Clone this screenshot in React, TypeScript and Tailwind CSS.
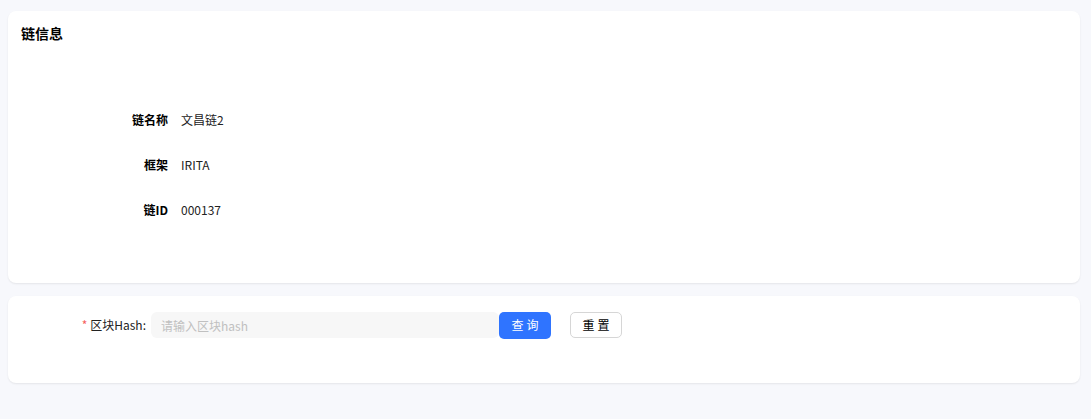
export default function App() {
  const rows = [
    { label: '链名称', value: '文昌链2' },
    { label: '框架', value: 'IRITA' },
    { label: '链ID', value: '000137' },
  ]

  return (
    <div
      className="w-[1091px] h-[419px] bg-[#f7f8fc] px-2 pt-[11px] text-[#1f1f1f]"
      style={{ fontFamily: '"Noto Sans CJK SC", "Noto Sans", sans-serif' }}
    >
      {/* Chain info card */}
      <div className="w-[1072px] h-[272px] bg-white rounded-lg shadow-[0_1px_2px_rgba(0,0,0,0.08)] pt-[12px] px-[13px]">
        <h3 className="text-[14px] leading-[20px] font-bold text-black">链信息</h3>
        <div className="mt-[67px] flex flex-col gap-[25px]">
          {rows.map(r => (
            <div key={r.label} className="flex items-center h-[20px] text-[12px]">
              <div className="w-[147px] text-right font-bold text-black">{r.label}</div>
              <div className="ml-[13px] text-[#222]">{r.value}</div>
            </div>
          ))}
        </div>
      </div>

      {/* Query card */}
      <div className="mt-[13px] w-[1072px] h-[87px] bg-white rounded-lg shadow-[0_1px_2px_rgba(0,0,0,0.08)] pt-[16px]">
        <div className="flex items-center h-[26px] text-[12px]">
          <div className="w-[138px] flex justify-end items-center">
            <span className="text-[#f5605c] mr-[3px]">*</span>
            <span className="text-[#222]">区块Hash:</span>
          </div>
          <input
            className="ml-[5px] w-[348px] h-[26px] rounded-[6px] bg-[#f7f7f7] px-[10px] text-[12px] outline-none placeholder:text-[#c0c0c0]"
            placeholder="请输入区块hash"
          />
          <button className="w-[52px] h-[27px] rounded-[5px] bg-[#2f74ff] text-white text-[12px] tracking-[3px] pl-[3px]">
            查询
          </button>
          <button className="ml-[19px] w-[52px] h-[26px] rounded-[5px] border border-[#d6d6d6] bg-white text-black text-[12px] tracking-[3px] pl-[3px]">
            重置
          </button>
        </div>
      </div>
    </div>
  )
}
